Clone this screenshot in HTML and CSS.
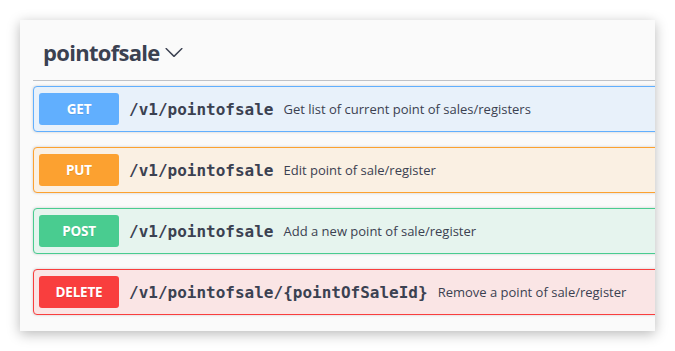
FILE: index.html
```html
<!DOCTYPE html>
<html lang="en">
<head>
    <meta charset="UTF-8">
    <meta name="viewport" content="width=device-width, initial-scale=1.0">
    <title>pointofsale</title>
    <link rel="stylesheet" href="styles.css">
</head>
<body>
    <div class="panel">
        <div class="tag-section">
            <h3 class="opblock-tag">
                <span class="tag-name">pointofsale</span>
                <svg class="arrow" width="20" height="20" viewBox="0 0 20 20">
                    <path d="M17.418 6.109c.272-.268.709-.268.979 0s.271.701 0 .969l-7.908 7.83c-.27.268-.707.268-.979 0l-7.908-7.83c-.27-.268-.27-.701 0-.969.271-.268.709-.268.979 0L10 13.25l7.418-7.141z"/>
                </svg>
            </h3>

            <div class="opblock get">
                <span class="method">GET</span>
                <span class="path">/v1/pointofsale</span>
                <span class="description">Get list of current point of sales/registers</span>
            </div>

            <div class="opblock put">
                <span class="method">PUT</span>
                <span class="path">/v1/pointofsale</span>
                <span class="description">Edit point of sale/register</span>
            </div>

            <div class="opblock post">
                <span class="method">POST</span>
                <span class="path">/v1/pointofsale</span>
                <span class="description">Add a new point of sale/register</span>
            </div>

            <div class="opblock delete">
                <span class="method">DELETE</span>
                <span class="path">/v1/pointofsale/{pointOfSaleId}</span>
                <span class="description">Remove a point of sale/register</span>
            </div>
        </div>
    </div>
</body>
</html>
```

FILE: styles.css
```css
* {
    margin: 0;
    padding: 0;
    box-sizing: border-box;
}
body {
    background: #ffffff;
    font-family: "Open Sans", sans-serif;
    color: #3b4151;
    padding: 20px;
    width: 675px;
    height: 351px;
    overflow: hidden;
}
.panel {
    width: 635px;
    height: 311px;
    background: #fafafa;
    box-shadow: 0 3px 12px rgba(0, 0, 0, 0.28);
    overflow: hidden;
    padding: 0 0 0 13px;
}
.tag-section {
    width: 700px;
}
.opblock-tag {
    display: flex;
    align-items: center;
    height: 61px;
    padding: 12px 20px 8px 10px;
    border-bottom: 1px solid rgba(59, 65, 81, 0.3);
    margin-bottom: 5px;
    font-family: "Open Sans", sans-serif;
    font-size: 22px;
    font-weight: 700;
    letter-spacing: -0.7px;
    color: #3b4151;
}
.arrow {
    margin-left: 4px;
    fill: #3b4151;
}
.opblock {
    display: flex;
    align-items: center;
    height: 46px;
    padding: 5px;
    margin-bottom: 15px;
    border: 1px solid;
    border-radius: 4px;
    box-shadow: 0 0 3px rgba(0, 0, 0, 0.19);
}
.method {
    width: 80px;
    padding: 7px 0;
    border-radius: 3px;
    text-align: center;
    color: #fff;
    font-size: 13.5px;
    font-weight: 700;
    letter-spacing: -0.2px;
    text-shadow: 0 1px 0 rgba(0, 0, 0, 0.1);
}
.path {
    padding: 0 10px;
    font-family: "DejaVu Sans Mono", monospace;
    font-size: 16px;
    font-weight: 700;
    color: #3b4151;
}
.description {
    font-size: 13px;
    color: #3b4151;
}
.get {
    background: #e8f1fa;
    border-color: #61affe;
}
.get .method {
    background: #61affe;
}
.put {
    background: #faf0e3;
    border-color: #fca130;
}
.put .method {
    background: #fca130;
}
.post {
    background: #e6f4ee;
    border-color: #49cc90;
}
.post .method {
    background: #49cc90;
}
.delete {
    background: #fae5e5;
    border-color: #f93e3e;
}
.delete .method {
    background: #f93e3e;
}
```
